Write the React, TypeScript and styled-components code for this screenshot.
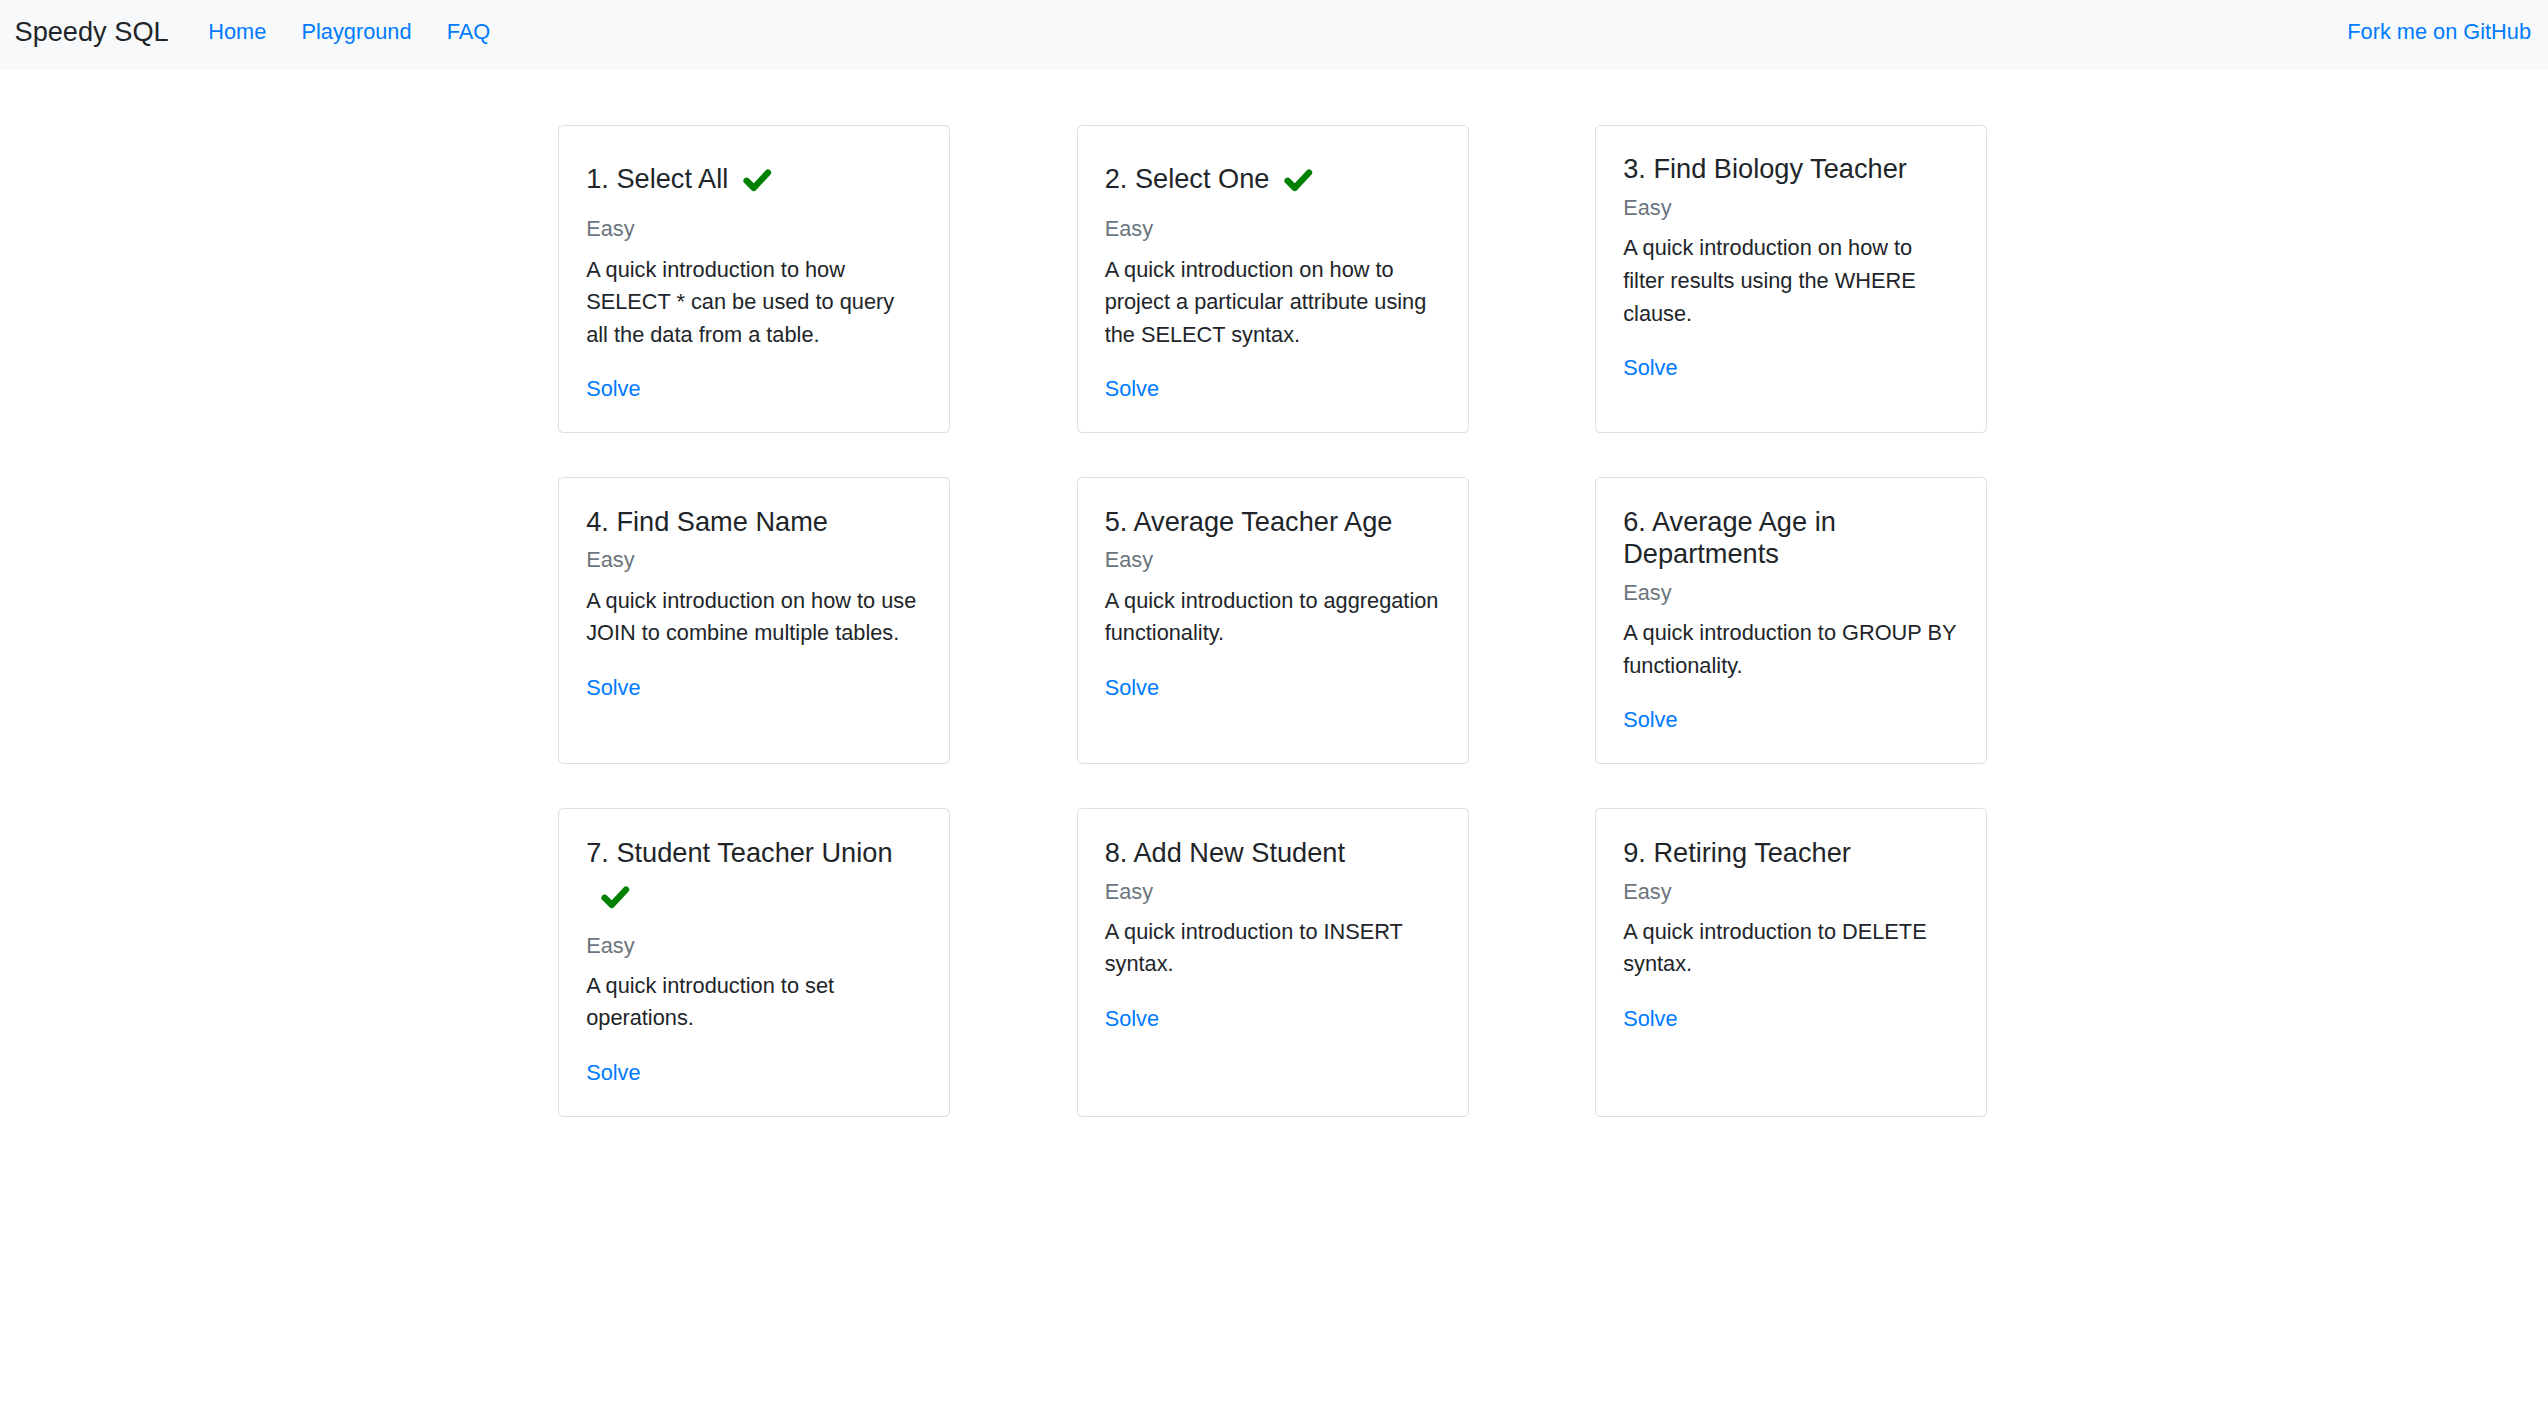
import React from "react";
import styled, { createGlobalStyle } from "styled-components";

const GlobalStyle = createGlobalStyle`
  html, body {
    margin: 0;
    padding: 0;
    background: #ffffff;
  }
  body {
    font-family: "Liberation Sans", Arial, sans-serif;
    font-size: 21.76px;
    line-height: 1.5;
    color: #212529;
  }
  * { box-sizing: border-box; }
`;

const NavBar = styled.nav`
  display: flex;
  align-items: center;
  height: 70px;
  padding: 0 17px 5px 14.5px;
  background: #f8f9fa;
`;

const Brand = styled.a`
  font-size: 27.2px;
  line-height: 40.8px;
  color: #212529;
  text-decoration: none;
  margin-right: 22px;
  white-space: nowrap;
`;

const NavList = styled.ul`
  display: flex;
  list-style: none;
  margin: 0;
  padding: 0;
  flex: 1;
`;

const NavLink = styled.a`
  display: block;
  padding: 0 17.6px;
  font-size: 21.76px;
  line-height: 32.64px;
  color: #007bff;
  text-decoration: none;
`;

const GitHubLink = styled.a`
  font-size: 21.76px;
  line-height: 32.64px;
  color: #007bff;
  text-decoration: none;
`;

const Main = styled.main`
  padding: 55px 3px 40px 0;
  display: grid;
  grid-template-columns: repeat(3, 392px);
  column-gap: 126.5px;
  row-gap: 44px;
  justify-content: center;
`;

const Card = styled.div`
  display: flex;
  flex-direction: column;
  background: #fff;
  border: 1px solid rgba(0, 0, 0, 0.125);
  border-radius: 5.44px;
  padding: 27.2px 27.2px 26.4px;
`;

const Title = styled.h5`
  margin: 0 0 17.4px;
  font-size: 27.2px;
  line-height: 1.2;
  font-weight: 400;
  color: #212529;
`;

const CheckWrap = styled.span`
  display: inline-block;
  height: 54px;
  vertical-align: -19px;
  padding: 16.3px 0 0 14.5px;

  svg {
    display: block;
  }
`;

const Difficulty = styled.h6`
  margin: -8.16px 0 11.2px;
  font-size: 21.76px;
  line-height: 1.2;
  font-weight: 400;
  color: #6c757d;
`;

const Description = styled.p`
  margin: 0 0 21.76px;
`;

const SolveLink = styled.a`
  color: #007bff;
  text-decoration: none;
`;

const CheckIcon = () => (
  <svg width="29" height="23" viewBox="0 0 29 23" aria-hidden="true">
    <polyline
      points="3.6,11.8 10.8,18.9 25,3.6"
      fill="none"
      stroke="#008000"
      strokeWidth="6.4"
      strokeLinecap="round"
      strokeLinejoin="round"
    />
  </svg>
);

type Problem = {
  id: number;
  title: string;
  text: string;
  solved: boolean;
};

const problems: Problem[] = [
  { id: 1, title: "Select All", text: "A quick introduction to how SELECT * can be used to query all the data from a table.", solved: true },
  { id: 2, title: "Select One", text: "A quick introduction on how to project a particular attribute using the SELECT syntax.", solved: true },
  { id: 3, title: "Find Biology Teacher", text: "A quick introduction on how to filter results using the WHERE clause.", solved: false },
  { id: 4, title: "Find Same Name", text: "A quick introduction on how to use JOIN to combine multiple tables.", solved: false },
  { id: 5, title: "Average Teacher Age", text: "A quick introduction to aggregation functionality.", solved: false },
  { id: 6, title: "Average Age in Departments", text: "A quick introduction to GROUP BY functionality.", solved: false },
  { id: 7, title: "Student Teacher Union", text: "A quick introduction to set operations.", solved: true },
  { id: 8, title: "Add New Student", text: "A quick introduction to INSERT syntax.", solved: false },
  { id: 9, title: "Retiring Teacher", text: "A quick introduction to DELETE syntax.", solved: false },
];

const ProblemCard = ({ p }: { p: Problem }) => (
  <Card>
    <Title>
      {`${p.id}. ${p.title}`}
      {p.solved && (
        <CheckWrap>
          <CheckIcon />
        </CheckWrap>
      )}
    </Title>
    <Difficulty>Easy</Difficulty>
    <Description>{p.text}</Description>
    <div>
      <SolveLink href="#">Solve</SolveLink>
    </div>
  </Card>
);

export default function App() {
  return (
    <>
      <GlobalStyle />
      <NavBar>
        <Brand href="#">Speedy SQL</Brand>
        <NavList>
          <li><NavLink href="#">Home</NavLink></li>
          <li><NavLink href="#">Playground</NavLink></li>
          <li><NavLink href="#">FAQ</NavLink></li>
        </NavList>
        <GitHubLink href="#">Fork me on GitHub</GitHubLink>
      </NavBar>
      <Main>
        {problems.map((p) => (
          <ProblemCard key={p.id} p={p} />
        ))}
      </Main>
    </>
  );
}
